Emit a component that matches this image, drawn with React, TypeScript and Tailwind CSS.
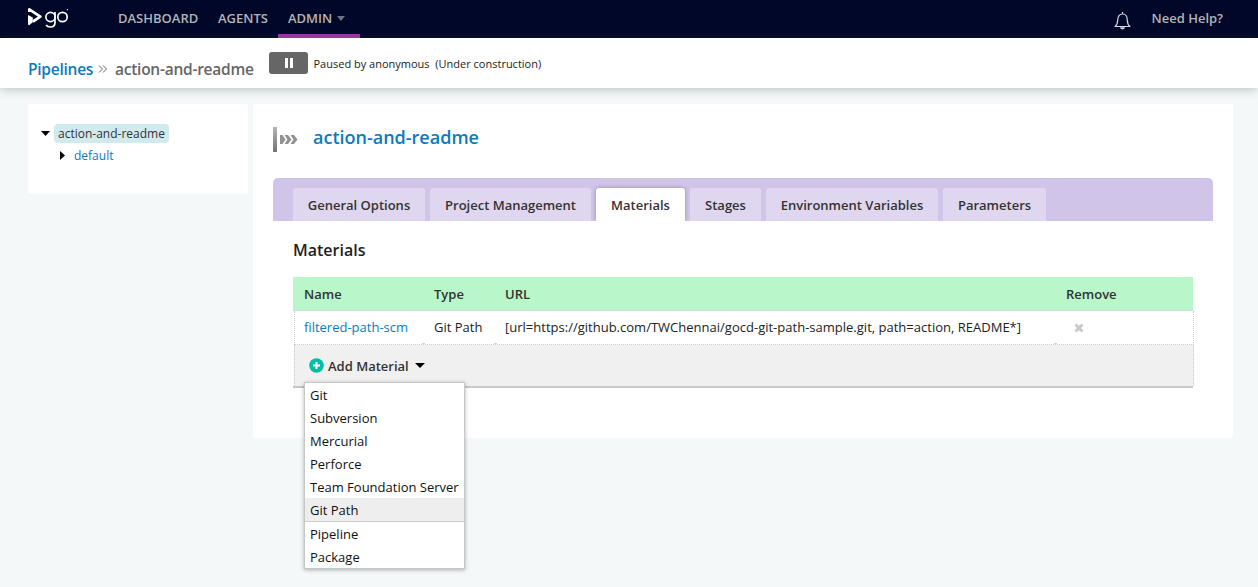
import React from "react";

const tabs = [
  { label: "General Options", width: "w-[132px]" },
  { label: "Project Management", width: "w-[161px]" },
  { label: "Materials", width: "w-[89px]", active: true },
  { label: "Stages", width: "w-[71px]" },
  { label: "Environment Variables", width: "w-[172px]" },
  { label: "Parameters", width: "w-[103px]" },
];

const materialTypes = [
  "Git",
  "Subversion",
  "Mercurial",
  "Perforce",
  "Team Foundation Server",
  "Git Path",
  "Pipeline",
  "Package",
];

function Logo() {
  return (
    <div className="flex h-[38px] w-[80px] shrink-0 items-start pt-[7px] text-white">
      <svg width="15" height="20" viewBox="0 0 15 20" className="shrink-0">
        <path d="M1.3 5V2.400L12.300 9.700 5 14.500" fill="none" stroke="currentColor" strokeWidth="2.700" strokeLinejoin="round" />
        <path d="M0 8 4.800 10.500v4.800L1.200 18.300 0 17.600z" fill="currentColor" />
      </svg>
      <svg width="27" height="24" viewBox="0 0 27 24" className="ml-[1px]" fill="none" stroke="currentColor" strokeWidth="1.7">
        <circle cx="6.500" cy="10" r="4.600" />
        <path d="M11 5v10.500c0 3-1.800 4.500-4.600 4.500-2 0-3.400-.7-4.300-2" />
        <circle cx="18.500" cy="10" r="4.700" />
        <path d="M22.800 2.700h1.200" strokeWidth="1" />
      </svg>
    </div>
  );
}

function TopBar() {
  return (
    <header className="flex h-[38px] items-start bg-[#000728] pl-7 pr-[34px] text-[13px] font-semibold leading-[37px] text-[#b4b4b4]">
      <Logo />
      <nav className="flex">
        <a className="w-[100px] px-[10px]">DASHBOARD</a>
        <a className="w-[70px] px-[10px]">AGENTS</a>
        <a className="flex h-[38px] w-[82px] items-center border-b-4 border-[#96389f] pl-[10px] pt-[2px]">
          ADMIN
          <svg width="8" height="5" viewBox="0 0 8 5" className="ml-[5px]">
            <path d="M0 0h8L4 5z" fill="#647984" />
          </svg>
        </a>
      </nav>
      <div className="ml-auto flex">
        <svg width="17" height="18" viewBox="0 0 17 18" className="mr-[20.500px] mt-[12px]" fill="none" stroke="#d7d8dc" strokeWidth="1.2">
          <path d="M1 14.5c2-1.5 2.7-3.5 2.7-6.5 0-3.600 2-6 4.800-6s4.800 2.400 4.800 6c0 3 .7 5 2.700 6.500z" strokeLinejoin="round" />
          <path d="M8.500 0v2" />
          <path d="M6 15.300h5c-.4 2.800-4.600 2.800-5 0z" fill="#d7d8dc" stroke="none" />
        </svg>
        <a className="w-[72.500px] whitespace-nowrap">Need Help?</a>
      </div>
    </header>
  );
}

function Breadcrumb() {
  return (
    <div className="flex h-[50px] items-start bg-white pl-7 shadow-[0_1px_10px_rgba(50,65,55,0.32)]">
      <a className="mt-[19px] w-[70px] text-[15.500px] font-semibold leading-6 tracking-[-0.250px] text-[#0a7bbd]">Pipelines</a>
      <svg width="10" height="8" viewBox="0 0 10 8" className="mt-[27px]" fill="none" stroke="#666" strokeWidth="1">
        <path d="M1 .5 4.500 4 1 7.500M5 .5 8.500 4 5 7.500" />
      </svg>
      <span className="ml-[7px] mt-[19px] w-[154px] whitespace-nowrap text-[15.500px] font-semibold leading-6 tracking-[-0.250px] text-[#666]">action-and-readme</span>
      <button className="mt-[14px] flex h-[22px] w-[39px] items-center justify-center gap-[2px] rounded-[3px] bg-[#666]">
        <i className="h-[10px] w-[3px] bg-white" />
        <i className="h-[10px] w-[3px] bg-white" />
      </button>
      <span className="ml-[5.500px] mt-4 whitespace-pre text-[11px] leading-5 text-[#222]">{"Paused by anonymous  (Under construction)"}</span>
    </div>
  );
}

function PipelineTree() {
  return (
    <aside className="h-[90px] w-[220px] shrink-0 rounded-[3px] bg-white pl-[13px] pt-5 text-[12px]">
      <div className="flex items-center">
        <svg width="9" height="5" viewBox="0 0 9 5"><path d="M0 0h9L4.500 5z" /></svg>
        <span className="ml-1 h-[19px] w-[115px] whitespace-nowrap rounded-[4px] bg-[#d1eaee] pl-1 leading-[19px] text-[#333]">action-and-readme</span>
      </div>
      <div className="mt-[3px] flex items-center pl-[19px]">
        <svg width="5" height="9" viewBox="0 0 5 9"><path d="M0 0v9L5 4.500z" /></svg>
        <a className="ml-[9px] leading-[19px] text-[#0a7bbd]">default</a>
      </div>
    </aside>
  );
}

function PipelineIcon() {
  return (
    <svg width="26" height="25" viewBox="0 0 26 25">
      <defs>
        <linearGradient id="metal" x1="0" y1="0" x2="0" y2="1">
          <stop stopColor="#b5b5b5" />
          <stop offset="1" stopColor="#737373" />
        </linearGradient>
      </defs>
      <path d="M0 0h4v25H0z" fill="url(#metal)" />
      <path d="M7 8h2.500l3 4.500-3 4.500H7zM11.500 8h3.500l3.500 4.500L15 17h-3.500l3-4.500zM17.500 8H21l3.500 4.500L21 17h-3.500l3-4.500z" fill="#929292" />
    </svg>
  );
}

function AddMenu() {
  return (
    <ul className="absolute left-[9px] top-[37px] z-10 w-[161px] border border-[#c7c7c7] bg-white text-[13px] leading-[23px] text-[#111] shadow-[0_1px_4px_rgba(0,0,0,0.3)]">
      {materialTypes.map((type) => (
        <li
          key={type}
          className={
            type === "Git Path"
              ? "h-6 border-b border-[#ccc] bg-[#eee] pl-[5px] pt-px"
              : "h-[23px] whitespace-nowrap pl-[5px] pt-px"
          }
        >
          {type}
        </li>
      ))}
    </ul>
  );
}

function MaterialsTable() {
  return (
    <div className="mt-[15px] w-[901px] text-[13px]">
      <div className="flex h-[34px] w-[900px] border-b border-[#d5dbd6] bg-[#b9f6ca] pl-[11px] font-semibold leading-[35px] text-[#333]">
        <span className="w-[130px]">Name</span>
        <span className="w-[71px]">Type</span>
        <span className="w-[561px]">URL</span>
        <span>Remove</span>
      </div>
      <div className="ml-px h-[34px] border-x border-b border-dotted border-[#ccc] text-[#222]">
        <div className="flex h-[32px] pl-[9px] leading-[33px]">
          <a className="w-[130px] text-[#0a7bbd]">filtered-path-scm</a>
          <span className="w-[71px]">Git Path</span>
          <span className="w-[561px] whitespace-nowrap tracking-[0.008px]">[url=https://github.com/TWChennai/gocd-git-path-sample.git, path=action, README*]</span>
          <svg width="10" height="10" viewBox="0 0 10 10" className="ml-2 mt-[12px]">
            <path d="m1.500 1.500 7 7M8.500 1.500l-7 7" stroke="#c8c8c8" strokeWidth="3" />
          </svg>
        </div>
        <div className="flex h-px">
          <i className="ml-[127px] w-[3px] bg-[#d6d6d6]" />
          <i className="ml-[69px] w-[3px] bg-[#d6d6d6]" />
          <i className="ml-[557px] w-[3px] bg-[#d6d6d6]" />
        </div>
      </div>
      <div className="relative ml-px h-[41px] border-x border-dotted border-[#ccc] bg-[#f0f0f0]">
        <button className="flex h-full items-center pl-[14px] pt-px font-semibold text-[#333]">
          <svg width="15" height="15" viewBox="0 0 15 15" className="mb-px">
            <circle cx="7.500" cy="7.500" r="7.300" fill="#00bfa5" />
            <path d="M7.500 4v7M4 7.500h7" stroke="white" strokeWidth="2" />
          </svg>
          <span className="ml-1 w-[82px] whitespace-nowrap pt-px text-left">Add Material</span>
          <svg width="10" height="5" viewBox="0 0 10 5" className="mb-px ml-[5px]"><path d="M0 0h10L5 5z" /></svg>
        </button>
        <AddMenu />
      </div>
      <div className="h-[2px] w-[900px] bg-[#c8c8c8]" />
    </div>
  );
}

export default function App() {
  return (
    <div className="h-[587px] overflow-hidden bg-[#f4f8f9] font-['Open_Sans',sans-serif]">
      <TopBar />
      <Breadcrumb />
      <div className="flex items-start gap-[5px] px-7 pt-4">
        <PipelineTree />
        <main className="h-[334px] w-[980px] shrink-0 rounded-[3px] bg-white px-5 pt-[21px]">
          <div className="flex items-start gap-[14px]">
            <div className="pt-[2px]"><PipelineIcon /></div>
            <h1 className="text-[18px] font-semibold leading-6 text-[#0a7bbd]">action-and-readme</h1>
          </div>
          <div className="mt-[26px] flex h-[43px] items-end gap-[5px] overflow-hidden rounded-t-[5px] bg-[#d0c4e8] pl-5">
            {tabs.map((tab) => (
              <a
                key={tab.label}
                className={`${tab.width} h-[33px] whitespace-nowrap rounded-t-[3px] text-center text-[13px] font-semibold leading-[34px] text-[#333] ${
                  tab.active ? "bg-white shadow-[0_0_4px_rgba(0,0,0,0.28)]" : "bg-[#dfd7ef]"
                }`}
              >
                {tab.label}
              </a>
            ))}
          </div>
          <section className="px-5 pt-[17px]">
            <h2 className="text-[16px] font-semibold leading-6 text-[#222]">Materials</h2>
            <MaterialsTable />
          </section>
        </main>
      </div>
    </div>
  );
}
